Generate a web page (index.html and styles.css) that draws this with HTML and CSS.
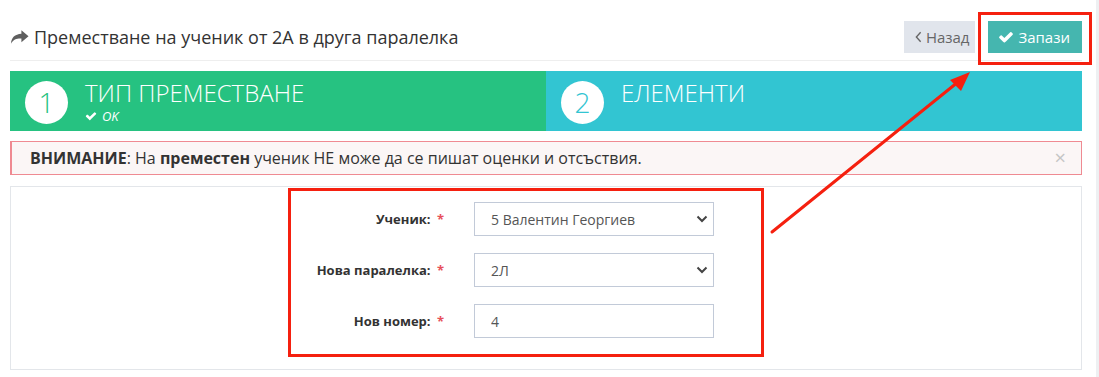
FILE: index.html
```html
<!DOCTYPE html>
<html lang="bg">
<head>
    <meta charset="UTF-8">
    <title>Преместване на ученик</title>
    <link rel="stylesheet" href="styles.css">
</head>
<body>
    <div class="page">
        <div class="page-head">
            <h1 class="page-title">
                <svg class="title-icon" viewBox="0 0 20 16"><path d="M12 1 L19.5 7.2 L12 13.4 V9.6 C7 9.4 3.6 10.6 1 15 C1.4 8.8 5 5 12 4.6 Z"/></svg>
                Преместване на ученик от 2А в друга паралелка
            </h1>
            <div class="actions">
                <button class="btn btn-back"><svg class="chev" viewBox="0 0 8 14"><path d="M6.5 1.5 L1.5 7 L6.5 12.5" fill="none" stroke="#666" stroke-width="1.6"/></svg>Назад</button>
                <button class="btn btn-save">
                    <svg class="check" viewBox="0 0 1792 1792"><path d="M1671 566q0 40-28 68l-724 724-136 136q-28 28-68 28t-68-28l-136-136-362-362q-28-28-28-68t28-68l136-136q28-28 68-28t68 28l294 295 656-657q28-28 68-28t68 28l136 136q28 28 28 68z"/></svg>Запази
                </button>
            </div>
        </div>

        <div class="steps">
            <div class="step step-done">
                <span class="step-num">1</span>
                <div class="step-text">
                    <div class="step-title">ТИП ПРЕМЕСТВАНЕ</div>
                    <div class="step-desc"><svg class="check-sm" viewBox="0 0 1792 1792"><path d="M1671 566q0 40-28 68l-724 724-136 136q-28 28-68 28t-68-28l-136-136-362-362q-28-28-28-68t28-68l136-136q28-28 68-28t68 28l294 295 656-657q28-28 68-28t68 28l136 136q28 28 28 68z"/></svg>OK</div>
                </div>
            </div>
            <div class="step step-active">
                <span class="step-num">2</span>
                <div class="step-text">
                    <div class="step-title">ЕЛЕМЕНТИ</div>
                </div>
            </div>
        </div>

        <div class="alert">
            <span><b>ВНИМАНИЕ</b>: На <b>преместен</b> ученик НЕ може да се пишат оценки и отсъствия.</span>
            <span class="close">&times;</span>
        </div>

        <div class="panel">
            <form class="form-grid">
                <label>Ученик: <span class="req">*</span></label>
                <select class="control"><option>5 Валентин Георгиев</option></select>
                <label>Нова паралелка: <span class="req">*</span></label>
                <select class="control"><option>2Л</option></select>
                <label>Нов номер: <span class="req">*</span></label>
                <input class="control" type="text" value="4">
            </form>
        </div>
    </div>

    <!-- annotations -->
    <div class="mark mark-save"></div>
    <div class="mark mark-form"></div>
    <svg class="arrow" width="1099" height="377" viewBox="0 0 1099 377">
        <line x1="772" y1="232" x2="958" y2="82" stroke="#f5200f" stroke-width="3" stroke-linecap="round"/>
        <polygon points="970,72 950,80 961,91" fill="#f5200f"/>
    </svg>
</body>
</html>
```

FILE: styles.css
```css
body {
    margin: 0;
    font-family: 'Open Sans', 'Liberation Sans', sans-serif;
    color: #333;
    background: #fff;
}
.page {
    width: 1072px;
    padding: 0 14px 0 10px;
    border-right: 3px solid #eef0f2;
    min-height: 377px;
    box-sizing: content-box;
}
.page-head {
    display: flex;
    align-items: center;
    justify-content: space-between;
    padding: 21px 0 7px;
    border-bottom: 1px solid #eee;
}
.page-title {
    margin: 0;
    font-size: 18px;
    font-weight: 400;
    color: #333;
    display: flex;
    align-items: center;
}
.title-icon {
    width: 19px;
    height: 16px;
    fill: #5f5f5f;
    margin-right: 5px;
}
.actions {
    display: flex;
    gap: 13px;
}
.btn {
    height: 32px;
    border: none;
    font-family: inherit;
    font-size: 15px;
    display: flex;
    align-items: center;
}
.btn-back {
    background: #e1e5ec;
    color: #666;
    padding: 0 6px 0 11px;
}
.chev {
    width: 7px;
    height: 12px;
    margin-right: 4px;
}
.btn-save {
    background: #45b6af;
    color: #fff;
    padding: 0 12px 0 10px;
}
.check {
    width: 16px;
    height: 16px;
    fill: #fff;
    margin-right: 4px;
}
.steps {
    display: flex;
    margin-top: 10px;
}
.step {
    flex: 1;
    height: 60px;
    display: flex;
    align-items: flex-start;
    padding-left: 15px;
    color: #fff;
}
.step-done {
    background: #26c281;
}
.step-active {
    background: #32c5d2;
}
.step-num {
    width: 43px;
    height: 43px;
    margin-top: 10px;
    border-radius: 50%;
    background: #fff;
    font-size: 28px;
    line-height: 43px;
    text-align: center;
    font-weight: 300;
}
.step-done .step-num {
    color: #26c281;
}
.step-active .step-num {
    color: #32c5d2;
}
.step-text {
    margin-left: 17px;
    padding-top: 8px;
}
.step-title {
    font-size: 24px;
    font-weight: 300;
    line-height: 28px;
}
.step-desc {
    font-size: 13px;
    font-style: italic;
    line-height: 14px;
    margin-top: 2px;
}
.check-sm {
    width: 12px;
    height: 12px;
    fill: #fff;
    margin-right: 5px;
    vertical-align: -1px;
}
.alert {
    margin-top: 10px;
    height: 34px;
    box-sizing: border-box;
    border: 1px solid #ef8a92;
    border-left-width: 2px;
    background: #fbf6f6;
    display: flex;
    align-items: center;
    justify-content: space-between;
    padding: 0 15px 0 18px;
    font-size: 16px;
    color: #333;
}
.close {
    color: #c5c5c5;
    font-size: 20px;
    line-height: 1;
}
.panel {
    margin-top: 11px;
    border: 1px solid #e3e6ea;
    height: 184px;
    box-sizing: border-box;
    padding-top: 15px;
}
.form-grid {
    display: grid;
    grid-template-columns: 448px 240px;
    column-gap: 15px;
    row-gap: 17px;
    align-items: center;
}
.form-grid label {
    text-align: right;
    padding-right: 15px;
    font-size: 13px;
    font-weight: 700;
}
.req {
    color: #e7505a;
    margin-left: 3px;
}
.control {
    height: 34px;
    box-sizing: border-box;
    border: 1px solid #c2cad8;
    background: #fff;
    font-family: inherit;
    font-size: 14px;
    color: #555;
    padding: 0 16px;
    appearance: none;
    -webkit-appearance: none;
    border-radius: 0;
}
select.control {
    background-image: url("data:image/svg+xml,%3Csvg xmlns='http://www.w3.org/2000/svg' width='12' height='8' viewBox='0 0 12 8'%3E%3Cpath d='M1.5 1.5 L6 6 L10.5 1.5' fill='none' stroke='%23444' stroke-width='2'/%3E%3C/svg%3E");
    background-repeat: no-repeat;
    background-position: right 5px center;
}
.mark {
    position: absolute;
    border: 3px solid #f5200f;
    box-sizing: border-box;
}
.mark-save {
    left: 978px;
    top: 12px;
    width: 114px;
    height: 53px;
}
.mark-form {
    left: 288px;
    top: 188px;
    width: 476px;
    height: 169px;
}
.arrow {
    position: absolute;
    left: 0;
    top: 0;
    pointer-events: none;
}
```
